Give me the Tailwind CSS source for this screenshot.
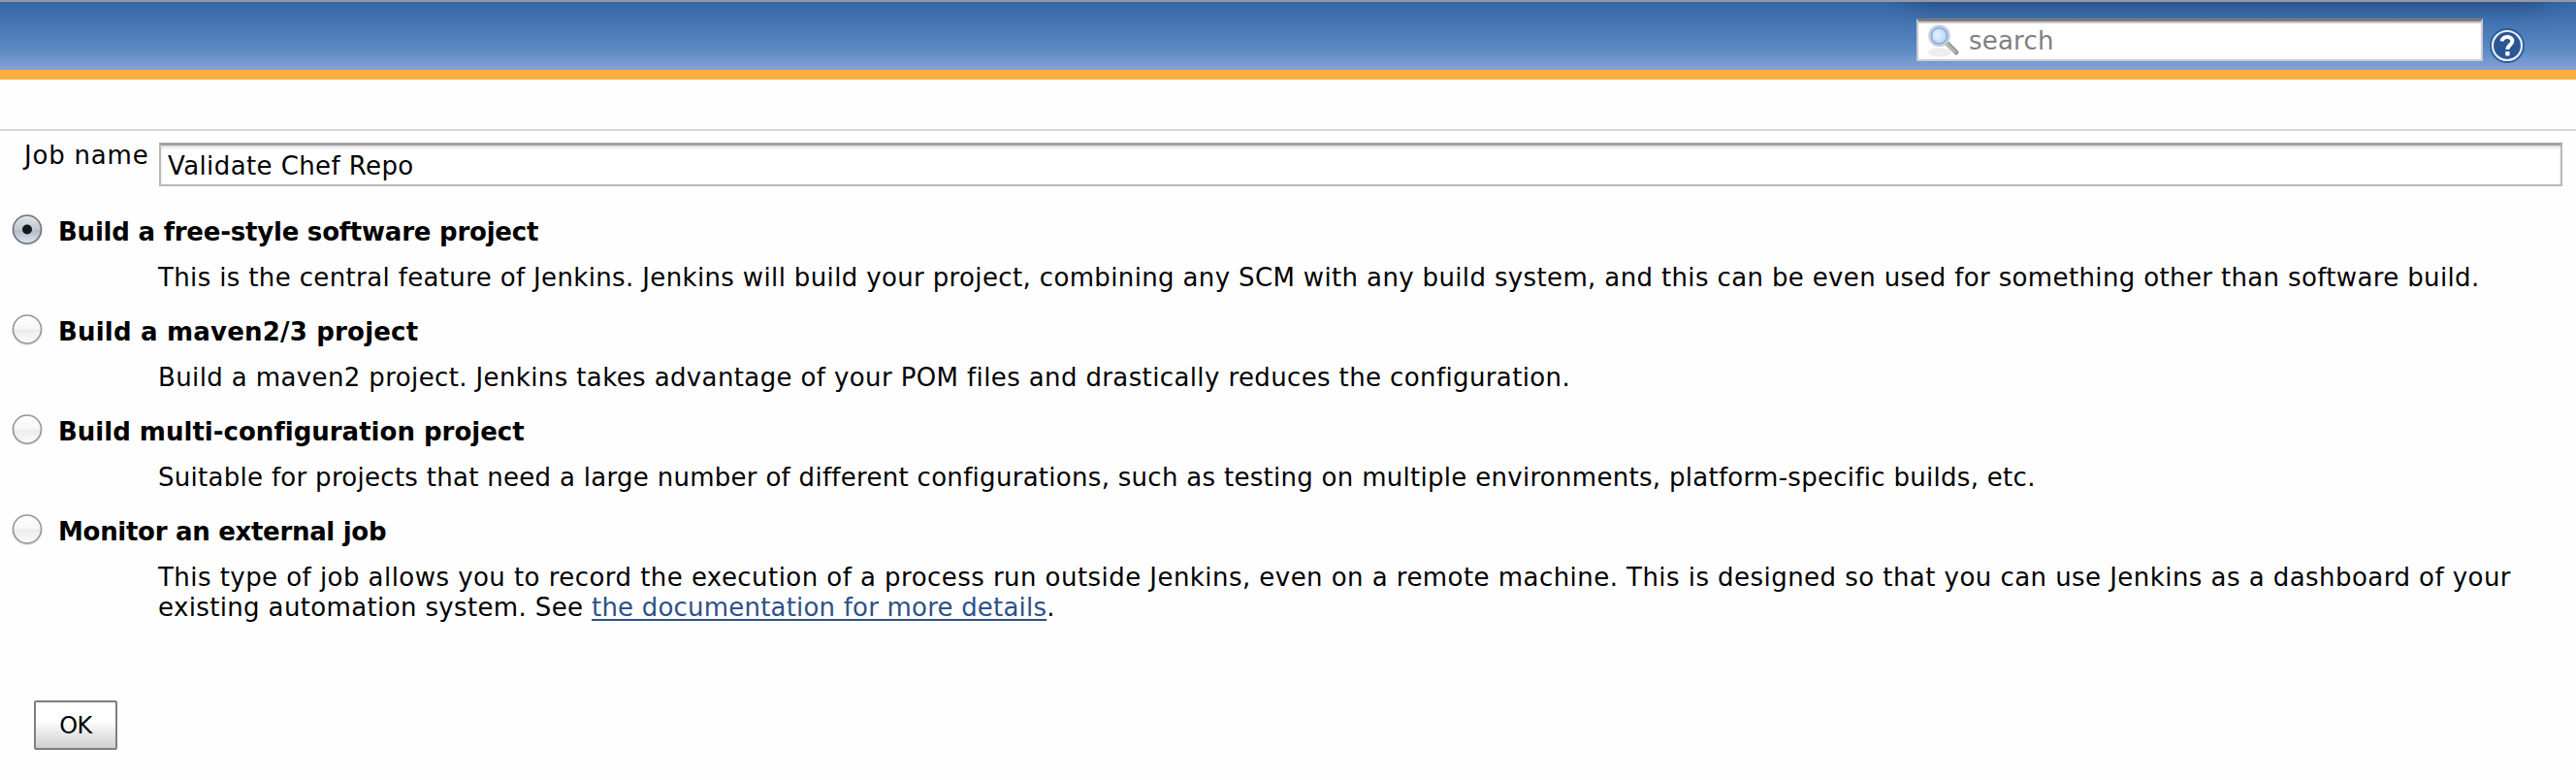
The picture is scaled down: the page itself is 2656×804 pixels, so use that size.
<!DOCTYPE html>
<html lang="en">
<head>
<meta charset="utf-8">
<title>New Job [Jenkins]</title>
<script src="https://cdn.jsdelivr.net/npm/@tailwindcss/browser@4"></script>
</head>
<body class="bg-[#fefefe] font-['DejaVu_Sans',Verdana,sans-serif] text-[26px] leading-[31px] text-black">
<header class="relative h-[82px] overflow-hidden border-t-2 border-b-10 border-t-[#999] border-b-[#fdae40] bg-linear-to-b from-[#3465a6] via-[#5a8ac2] via-70% to-[#88a1d9]">
  <div class="absolute -top-[24px] left-[1970px] h-[24px] w-[650px] shadow-[0_2px_24px_rgba(10,30,80,0.4)]"></div>
  <div class="relative flex justify-end pt-[17px] pr-[52px]">
    <label class="flex h-[44px] w-[584px] items-center border-2 border-t-3 border-[#c9ccd2] border-t-[#7b7b7b] bg-white pl-[9px] shadow-[inset_0_2px_1px_#c4c4c4]">
      <svg class="h-[34px] w-[34px] shrink-0" viewBox="0 0 34 34">
        <defs>
          <radialGradient id="glass" cx=".4" cy=".45" r=".7"><stop offset="0" stop-color="#e6f2ff"/><stop offset="1" stop-color="#a9cbf5"/></radialGradient>
        </defs>
        <ellipse cx="13" cy="29" rx="12" ry="4.5" fill="#ededed"/>
        <path d="M21 20 L30 29" stroke="#999" stroke-width="5" stroke-linecap="round"/>
        <path d="M20 20 L29 29" stroke="#bbb" stroke-width="2"/>
        <circle cx="12.500" cy="12" r="9.500" fill="url(#glass)" stroke="#c3cedd" stroke-width="3.500"/>
        <circle cx="12.500" cy="12" r="8" fill="none" stroke="#84aee2" stroke-width="1.500"/>
      </svg>
      <span class="pt-[2px] pl-[9px] tracking-[0.2px] text-[#808080]">search</span>
    </label>
    <svg class="mt-[9px] ml-[6px] h-[38px] w-[38px]" viewBox="0 0 38 38">
      <circle cx="19" cy="19" r="18" fill="#2c5a9c"/>
      <circle cx="19" cy="19" r="15" fill="#2b5696" stroke="#e6edf7" stroke-width="2.200"/>
      <path d="M13.800 14.500 C14 8.500 24.500 8.500 24.300 14.500 C24.200 18 19.500 18.500 19.300 23" fill="none" stroke="#fff" stroke-width="4"/>
      <rect x="17.200" y="25" width="4.400" height="4.400" rx="1" fill="#fff"/>
    </svg>
  </div>
</header>
<main class="mt-[51px] border-t-2 border-[#d8d8d6] pr-[14px]">
  <div class="flex pt-[12px]">
    <span class="-mt-[2px] w-[164px] pl-[25px] tracking-[0.8px]">Job name</span>
    <div class="flex h-[45px] flex-1 items-center border-2 border-t-3 border-[#b8b8b8] border-t-[#a0a0a0] bg-white pt-[3px] pl-[7px] tracking-[0.4px] shadow-[inset_0_2px_3px_#ddd]">Validate Chef Repo</div>
  </div>

  <section class="mt-[32px] h-[103px]">
    <div class="flex">
      <svg class="-mt-[4px] h-[36px] w-[60px] shrink-0" viewBox="0 0 60 36">
        <defs>
          <linearGradient id="on" x2="0" y2="1"><stop offset="0" stop-color="#e2e5e9"/><stop offset=".5" stop-color="#c0c8d1"/><stop offset=".55" stop-color="#b3bcc7"/><stop offset="1" stop-color="#dde6ee"/></linearGradient>
          <linearGradient id="off" x2="0" y2="1"><stop offset="0" stop-color="#fff"/><stop offset=".48" stop-color="#f6f6f6"/><stop offset=".52" stop-color="#ececec"/><stop offset="1" stop-color="#fafafa"/></linearGradient>
        </defs>
        <circle cx="28" cy="17.500" r="15.500" fill="#000" opacity=".12"/>
        <circle cx="28" cy="16.500" r="14.500" fill="url(#on)" stroke="#6d737b" stroke-width="1.600"/>
        <circle cx="28" cy="16.500" r="5" fill="#14171c"/>
      </svg>
      <b class="tracking-[-0.22px]">Build a free-style software project</b>
    </div>
    <p class="mt-[15px] ml-[163px] tracking-[0.36px] whitespace-nowrap">This is the central feature of Jenkins. Jenkins will build your project, combining any SCM with any build system, and this can be even used for something other than software build.</p>
  </section>

  <section class="h-[103px]">
    <div class="flex">
      <svg class="-mt-[4px] h-[36px] w-[60px] shrink-0" viewBox="0 0 60 36"><circle cx="28" cy="17.500" r="15.500" fill="#000" opacity=".1"/><circle cx="28" cy="16.500" r="14.500" fill="url(#off)" stroke="#969696" stroke-width="1.600"/></svg>
      <b class="tracking-[0.2px]">Build a maven2/3 project</b>
    </div>
    <p class="mt-[15px] ml-[163px] tracking-[0.38px] whitespace-nowrap">Build a maven2 project. Jenkins takes advantage of your POM files and drastically reduces the configuration.</p>
  </section>

  <section class="h-[103px]">
    <div class="flex">
      <svg class="-mt-[4px] h-[36px] w-[60px] shrink-0" viewBox="0 0 60 36"><circle cx="28" cy="17.500" r="15.500" fill="#000" opacity=".1"/><circle cx="28" cy="16.500" r="14.500" fill="url(#off)" stroke="#969696" stroke-width="1.600"/></svg>
      <b class="tracking-[0.01px]">Build multi-configuration project</b>
    </div>
    <p class="mt-[15px] ml-[163px] tracking-[0.29px] whitespace-nowrap">Suitable for projects that need a large number of different configurations, such as testing on multiple environments, platform-specific builds, etc.</p>
  </section>

  <section class="h-[188px]">
    <div class="flex">
      <svg class="-mt-[4px] h-[36px] w-[60px] shrink-0" viewBox="0 0 60 36"><circle cx="28" cy="17.500" r="15.500" fill="#000" opacity=".1"/><circle cx="28" cy="16.500" r="14.500" fill="url(#off)" stroke="#969696" stroke-width="1.600"/></svg>
      <b class="tracking-[-0.3px]">Monitor an external job</b>
    </div>
    <p class="mt-[15px] ml-[163px] tracking-[0.45px] whitespace-nowrap">This type of job allows you to record the execution of a process run outside Jenkins, even on a remote machine. This is designed so that you can use Jenkins as a dashboard of your<br><span class="tracking-[0.36px]">existing automation system. See </span><a href="#" class="tracking-[0.2px] text-[#2d5187] underline decoration-2 underline-offset-[3px]">the documentation for more details</a>.</p>
  </section>

  <button class="mt-px ml-[35px] h-[51px] w-[86px] rounded-[2px] border-2 border-[#7f7f7f] bg-linear-to-b from-white from-40% to-[#cfcfd0] pt-[2px] text-[24px] tracking-[-0.5px]">OK</button>
</main>
</body>
</html>
